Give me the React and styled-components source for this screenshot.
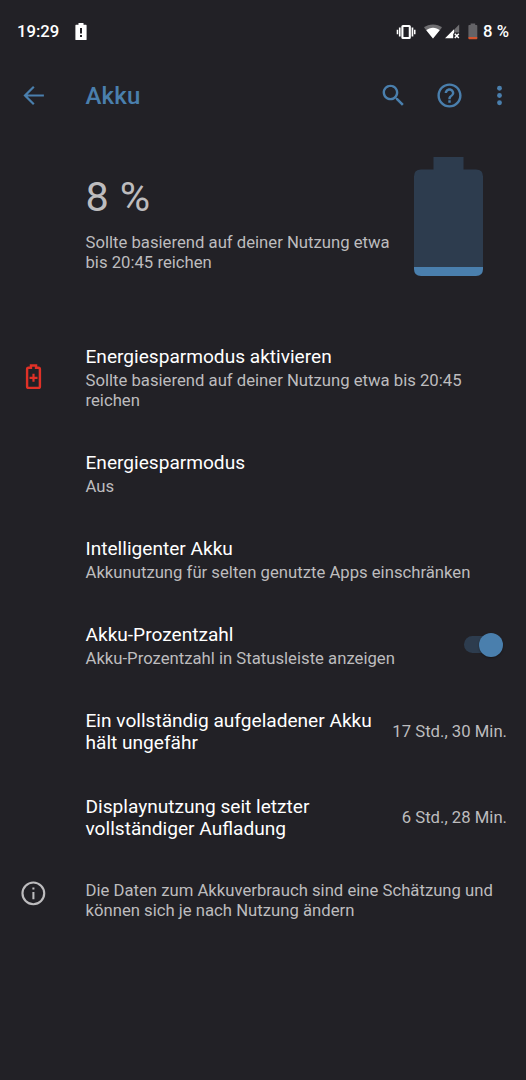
import React, { useState } from 'react'
import styled, { createGlobalStyle } from 'styled-components'

const GlobalStyle = createGlobalStyle`
    body {
        margin: 0;
        background: #222126;
    }
    * {
        box-sizing: border-box;
    }
`
const Screen = styled.div`
    width: 526px;
    height: 1080px;
    overflow: hidden;
    background: #222126;
    color: #bdbcbe;
    font-family: Roboto, "Liberation Sans", sans-serif;
    font-size: 16.7px;
    line-height: 20px;
`
const Icon = styled.svg`
    display: block;
    flex: none;
    fill: currentColor;
`
const StatusBar = styled.div`
    display: flex;
    align-items: center;
    height: 62px;
    padding: 1px 17px 0;
    color: #fff;
    font-size: 16.7px;
    font-weight: 500;
`
const StatusIcons = styled.div`
    display: flex;
    align-items: center;
    margin-left: auto;
`
const StatusText = styled.span`
    width: ${({ $width }) => $width ? `${$width}px` : 'auto'};
    padding-top: 1px;
`
const Spacer = styled.span`
    width: ${({ $width }) => $width}px;
`
const Toolbar = styled.header`
    display: flex;
    align-items: center;
    height: 67px;
    padding: 0 12px 0 19px;
    color: #4a7fad;
`
const Heading = styled.h1`
    flex: 1;
    margin: 0 0 0 37.5px;
    font-size: 24px;
    font-weight: 500;
    line-height: 28px;
    letter-spacing: 0.2px;
`
const ToolButton = styled.button`
    display: flex;
    padding: 0;
    border: 0;
    background: none;
    color: inherit;
    margin-left: ${({ $gap }) => $gap || 0}px;
`
const Summary = styled.section`
    display: flex;
    justify-content: space-between;
    height: 195.5px;
    padding: 28px 43px 0 85.5px;
`
const Level = styled.div`
    margin: 16px 0 12px;
    font-size: 41.5px;
    line-height: 48px;
    letter-spacing: 0.3px;
`
const Row = styled.div`
    display: flex;
    min-height: 86px;
    padding: 20.5px 19px 20.5px 0;
`
const IconSlot = styled.div`
    display: flex;
    flex: none;
    align-items: center;
    width: 85.5px;
    padding: 0 0 2px 19px;
    color: ${({ $color }) => $color || 'inherit'};
`
const Texts = styled.div`
    flex: 1;
    padding-top: 1px;
    margin-bottom: -1px;
`
const Title = styled.div`
    color: #fff;
    font-size: 19.1px;
    line-height: 22px;
`
const Description = styled.div`
    margin-top: 3px;
`
const Value = styled.div`
    align-self: center;
    margin-left: 19px;
    white-space: nowrap;
`
const Track = styled.button`
    display: flex;
    align-items: center;
    align-self: center;
    justify-content: ${({ $on }) => $on ? 'flex-end' : 'flex-start'};
    width: 37px;
    height: 17px;
    margin: 0 6px 1.5px 0;
    padding: 0;
    border: 0;
    border-radius: 9px;
    background: #2d3c4e;
`
const Thumb = styled.span`
    flex: none;
    width: 24px;
    height: 24px;
    margin-right: -2px;
    border-radius: 50%;
    background: #4a7fad;
    box-shadow: 0 1px 2px rgba(0, 0, 0, 0.35);
`
const Footer = styled.footer`
    display: flex;
    align-items: flex-start;
    padding: 19px 19px 0 0;
`
const FooterIcon = styled.div`
    flex: none;
    width: 85.5px;
    padding: 0 0 0 19px;
    margin-top: -1px;
`

const BatteryAlertIcon = () => (
    <Icon width="12" height="18" viewBox="0 0 12 18">
        <path fillRule="evenodd" d="M3.500 0h5v1.800H11a.6.6 0 0 1 .6.6v14a.6.6 0 0 1-.6.6H1a.6.6 0 0 1-.6-.6v-14a.6.6 0 0 1 .6-.6h2.500zM5 5v5.500h2V5zM5 12v2h2v-2z" />
    </Icon>
)

const VibrateIcon = () => (
    <Icon width="20" height="16" viewBox="0 0 20 16">
        <rect x="6.400" y="2" width="7.400" height="12" rx=".6" fill="none" stroke="currentColor" strokeWidth="2.100" />
        <path d="M2.900 3.600h1.700v8.800H2.900zM.7 5.800h1.500v4.500H.7zM15.600 3.600h1.700v8.800h-1.700zM18 5.800h1.500v4.500H18z" />
    </Icon>
)

const WifiIcon = () => (
    <Icon width="18" height="15" viewBox="0 0 18 15">
        <path opacity=".35" d="M9 .4C5.500.4 2.300 1.600 0 3.600L9 14.600 18 3.600C15.700 1.600 12.500.4 9 .4z" />
        <path d="M9 3.800c-2.600 0-4.900.9-6.700 2.500L9 14.600l6.700-8.300C13.900 4.700 11.600 3.800 9 3.800z" />
    </Icon>
)

const SignalIcon = () => (
    <Icon width="15" height="15" viewBox="0 0 15 15">
        <path opacity=".35" d="M14.200.5v8H9V5.700z" />
        <path d="M9 5.200v4.300h-.8v4.700H0z" />
        <path d="M9.800 9.800l4 4.200M13.800 9.800L9.800 14" fill="none" stroke="currentColor" strokeWidth="1.500" />
    </Icon>
)

const BatteryLowIcon = () => (
    <Icon width="10" height="17" viewBox="0 0 10 17">
        <path fill="#646367" d="M2.600.5h4.600V2H8.500q.8 0 .8.800v11.700H.4V2.800q0-.8.8-.8h1.400z" />
        <path fill="#d4552f" d="M.4 14h8.900v1.400q0 .8-.8.800H1.200q-.8 0-.8-.8z" />
    </Icon>
)

const BackIcon = () => (
    <Icon width="29" height="29" viewBox="0 0 29 29">
        <path d="M14.800 5.700L6 14.500l8.800 8.800M6 14.500h18.900" fill="none" stroke="currentColor" strokeWidth="2.200" />
    </Icon>
)

const SearchIcon = () => (
    <Icon width="29" height="29" viewBox="0 0 24 24">
        <path d="M15.500 14h-.79l-.28-.27C15.410 12.590 16 11.110 16 9.500 16 5.910 13.090 3 9.500 3S3 5.910 3 9.500 5.910 16 9.500 16c1.610 0 3.090-.59 4.230-1.570l.27.28v.79l5 4.990L20.490 19l-4.990-5zm-6 0C7.010 14 5 11.990 5 9.500S7.010 5 9.500 5 14 7.010 14 9.500 11.990 14 9.500 14z" />
    </Icon>
)

const HelpIcon = () => (
    <Icon width="29" height="29" viewBox="0 0 24 24">
        <path d="M11 18h2v-2h-2v2zm1-16C6.480 2 2 6.480 2 12s4.480 10 10 10 10-4.480 10-10S17.520 2 12 2zm0 18c-4.410 0-8-3.590-8-8s3.590-8 8-8 8 3.590 8 8-3.590 8-8 8zm0-14c-2.210 0-4 1.790-4 4h2c0-1.100.9-2 2-2s2 .9 2 2c0 2-3 1.750-3 5h2c0-2.250 3-2.500 3-5 0-2.210-1.790-4-4-4z" />
    </Icon>
)

const MoreIcon = () => (
    <Icon width="29" height="29" viewBox="0 0 24 24">
        <circle cx="12" cy="6" r="2" />
        <circle cx="12" cy="12" r="2" />
        <circle cx="12" cy="18" r="2" />
    </Icon>
)

const BatterySaverIcon = () => (
    <Icon width="29" height="29" viewBox="0 0 24 24">
        <path d="M9.900 2.900h4.200v1.900h2q1.200 0 1.200 1.200v14.200q0 1.200-1.200 1.200H7.900q-1.200 0-1.200-1.200V6q0-1.200 1.200-1.200h2z" fill="none" stroke="currentColor" strokeWidth="2" />
        <path d="M15.300 12.200h-2.400V9.800h-1.800v2.400H8.700V14h2.400v2.400h1.800V14h2.400z" />
    </Icon>
)

const InfoIcon = () => (
    <Icon width="28.700" height="28.700" viewBox="0 0 24 24">
        <circle cx="12" cy="12" r="9.100" fill="none" stroke="currentColor" strokeWidth="1.800" />
        <path d="M11.200 7.100h1.700v1.700h-1.700zM11.200 10.900h1.700v6h-1.700z" />
    </Icon>
)

const BatteryMeter = () => (
    <Icon width="69" height="119" viewBox="0 0 69 119">
        <path fill="#2d3c4e" d="M19.500 0h30v12.500H62q7 0 7 7V110H0V19.500q0-7 7-7h12.500z" />
        <path fill="#4a7fad" d="M0 110h69v2q0 7-7 7H7q-7 0-7-7z" />
    </Icon>
)

const Preference = ({ icon, iconColor, title, description, children }) => (
    <Row>
        <IconSlot $color={iconColor}>{icon}</IconSlot>
        <Texts>
            <Title>{title}</Title>
            {description && <Description>{description}</Description>}
        </Texts>
        {children}
    </Row>
)

const App = () => {
    const [showPercentage, setShowPercentage] = useState(true)

    return (
        <Screen>
            <GlobalStyle />

            <StatusBar>
                <StatusText $width={58}>19:29</StatusText>
                <BatteryAlertIcon />
                <StatusIcons>
                    <VibrateIcon />
                    <Spacer $width={8} />
                    <WifiIcon />
                    <Spacer $width={3} />
                    <SignalIcon />
                    <Spacer $width={8} />
                    <BatteryLowIcon />
                    <Spacer $width={5} />
                    <StatusText>8 %</StatusText>
                </StatusIcons>
            </StatusBar>

            <Toolbar>
                <ToolButton><BackIcon /></ToolButton>
                <Heading>Akku</Heading>
                <ToolButton><SearchIcon /></ToolButton>
                <ToolButton $gap={27.5}><HelpIcon /></ToolButton>
                <ToolButton $gap={21}><MoreIcon /></ToolButton>
            </Toolbar>

            <Summary>
                <div>
                    <Level>8 %</Level>
                    Sollte basierend auf deiner Nutzung etwa<br />
                    bis 20:45 reichen
                </div>
                <BatteryMeter />
            </Summary>

            <Preference
                icon={<BatterySaverIcon />}
                iconColor="#e03127"
                title="Energiesparmodus aktivieren"
                description="Sollte basierend auf deiner Nutzung etwa bis 20:45 reichen"
            />
            <Preference title="Energiesparmodus" description="Aus" />
            <Preference
                title="Intelligenter Akku"
                description="Akkunutzung für selten genutzte Apps einschränken"
            />
            <Preference
                title="Akku-Prozentzahl"
                description="Akku-Prozentzahl in Statusleiste anzeigen"
            >
                <Track $on={showPercentage} onClick={() => setShowPercentage(!showPercentage)}>
                    <Thumb />
                </Track>
            </Preference>
            <Preference title="Ein vollständig aufgeladener Akku hält ungefähr">
                <Value>17 Std., 30 Min.</Value>
            </Preference>
            <Preference title="Displaynutzung seit letzter vollständiger Aufladung">
                <Value>6 Std., 28 Min.</Value>
            </Preference>

            <Footer>
                <FooterIcon><InfoIcon /></FooterIcon>
                <Texts>
                    Die Daten zum Akkuverbrauch sind eine Schätzung und können sich je nach Nutzung ändern
                </Texts>
            </Footer>
        </Screen>
    )
}

export default App
